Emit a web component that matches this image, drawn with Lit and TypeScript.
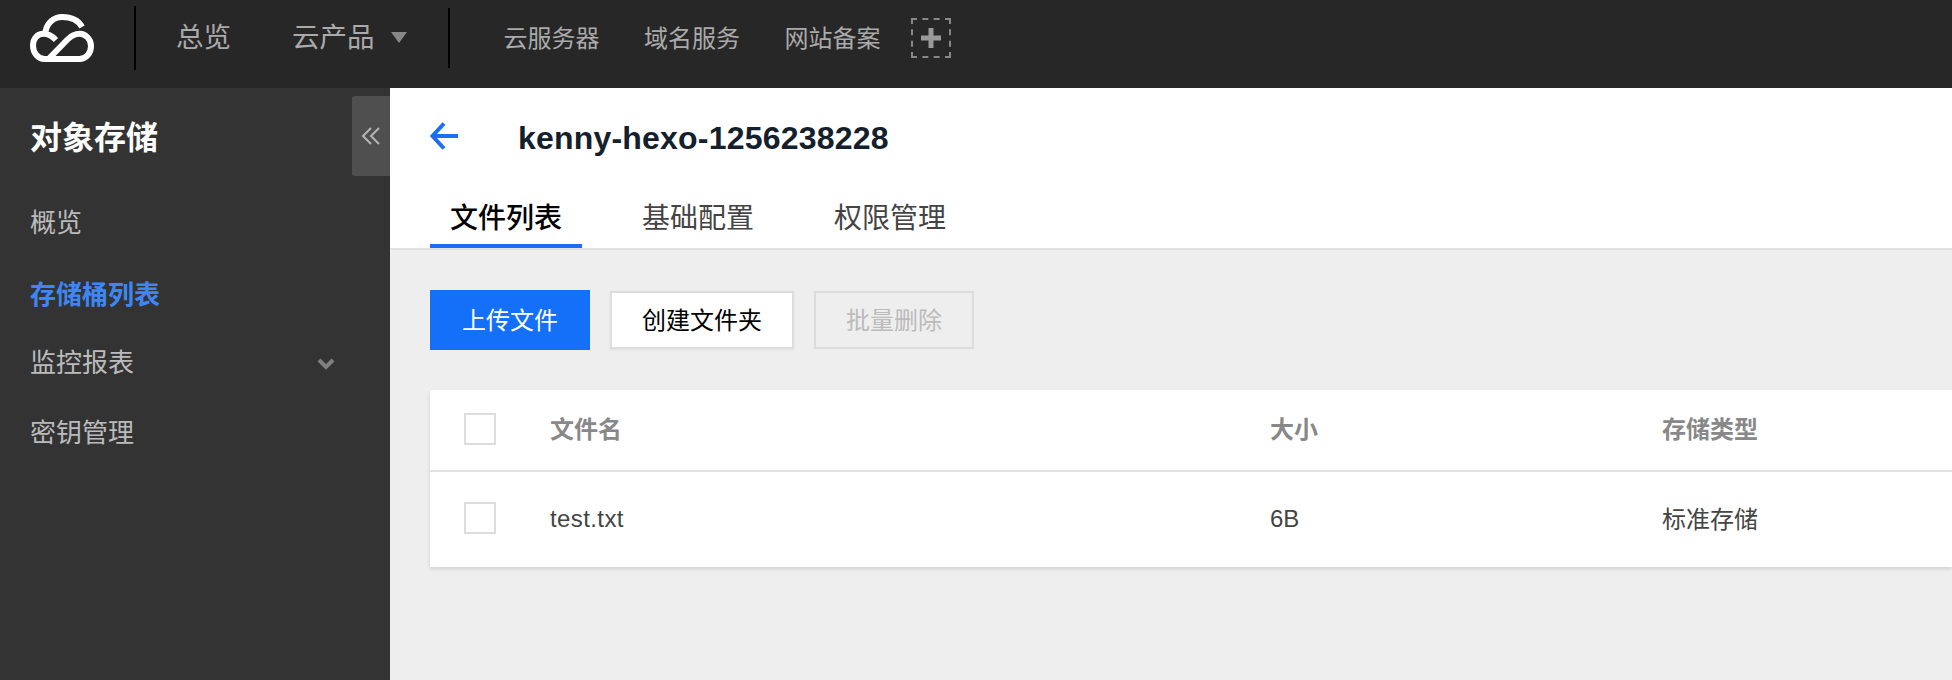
import { LitElement, html, css } from "lit";
import { customElement } from "lit/decorators.js";

@customElement("app-root")
export class AppRoot extends LitElement {
  static styles = css`
    :host { display: block; height: 680px; overflow: hidden; font-family: "Liberation Sans", "Noto Sans CJK SC", sans-serif; background: #eeeeee; }
    * { box-sizing: border-box; }
    .top { height: 88px; background: #272727; display: flex; align-items: flex-start; color: #aaa; }
    .logo { width: 64px; height: 48px; margin: 14px 0 0 30px; flex: none; }
    .vline { width: 2px; height: 64px; background: #000; flex: none; margin-top: 6px; }
    .vline.a { margin-left: 40px; }
    .vline.b { margin-left: 41px; height: 60px; margin-top: 8px; }
    .top-main { display: flex; align-items: center; height: 69px; font-size: 27.5px; }
    .ov { margin-left: 40px; }
    .prod { margin-left: 61px; display: flex; align-items: center; }
    .caret { width: 0; height: 0; border-left: 8px solid transparent; border-right: 8px solid transparent; border-top: 11px solid #888; margin: 6px 0 0 16px; }
    .links { display: flex; align-items: center; height: 72px; font-size: 24px; margin-left: 54px; gap: 44.5px; }
    .plus { width: 40px; height: 40px; border: 2px dashed #888; margin-left: -14px; display: flex; align-items: center; justify-content: center; margin-top: 4px; }
    .body { display: flex; height: 592px; }
    .side { width: 390px; flex: none; background: #333; position: relative; padding: 0 30px; }
    .side h1 { margin: 0; font-size: 32px; line-height: 40px; color: #fff; font-weight: 700; padding-top: 30px; }
    .menu { display: flex; flex-direction: column; margin-top: 47px; font-size: 26px; color: #bbb; }
    .menu div { height: 70px; line-height: 36px; display: flex; justify-content: space-between; align-items: flex-start; }
    .menu .on { color: #3f86f5; font-weight: 700; padding-top: 2px; }
    .chev { margin: 12px 25px 0 0; }
    .collapse { position: absolute; right: 0; top: 8px; width: 38px; height: 80px; background: #4f4f4f; border-radius: 3px 0 0 3px; display: flex; align-items: center; justify-content: center; }
    .main { flex: 1; min-width: 0; display: flex; flex-direction: column; }
    .head { background: #fff; height: 162px; border-bottom: 2px solid #e2e2e2; padding-left: 40px; display: flex; flex-direction: column; }
    .title { display: flex; align-items: center; height: 78px; padding-top: 22px; }
    .arrow { margin-bottom: 4px; flex: none; }
    .title b { font-size: 32px; color: #14202c; margin-left: 60px; letter-spacing: 0.2px; }
    .tabs { display: flex; height: 82px; font-size: 28px; color: #444; gap: 38px; }
    .tab { padding: 33px 21px 0; height: 82px; line-height: 40px; }
    .tab.on { color: #000; font-weight: 500; border-bottom: 4px solid #1a6ff5; width: 152px; padding: 33px 0 0; text-align: center; margin-right: 1px; }
    .content { padding: 40px 0 0 40px; }
    .btns { display: flex; gap: 20px; align-items: center; }
    .btn { height: 58px; font-size: 24px; padding-bottom: 3px; display: flex; align-items: center; justify-content: center; border: 2px solid #ddd; background: #fff; color: #000; box-shadow: 0 1px 3px rgba(0,0,0,.06); }
    .btn.p { width: 160px; height: 60px; background: #146ff9; border-color: #146ff9; color: #fff; box-shadow: none; }
    .btn.s { width: 184px; }
    .btn.d { width: 160px; background: #eeeeee; color: #bbb; box-shadow: none; }
    .table { margin-top: 40px; background: #fff; box-shadow: 0 2px 4px rgba(0,0,0,.12); }
    .row { display: grid; grid-template-columns: 120px 720px 392px 1fr; align-items: center; font-size: 24px; color: #444; }
    .row.h { height: 82px; padding-bottom: 3px; border-bottom: 2px solid #e2e2e2; color: #888; font-weight: 700; }
    .row.h span { padding-bottom: 2px; }
    .row.d { height: 95px; padding-bottom: 3px; }
    .lat { padding-top: 2px; }
    .cjk { padding-bottom: 2px; }
    .fname { letter-spacing: 0.4px; }
    .cb { width: 32px; height: 32px; border: 2px solid #ddd; margin-left: 34px; background: #fff; }
  `;

  render() {
    return html`
      <div class="top">
        <svg class="logo" viewBox="0 0 64 48" fill="none" stroke="#fff" stroke-width="6">
          <path d="M52 13 C47 3.500 37 3 32 3 C24 3 17 9 15.500 17.500"/>
          <path d="M26 26 C21.500 21.500 18 19.800 13.500 19.800 C7.500 19.800 3 24.500 3 31.500 C3 39 8 45 14.500 45 L49.500 45 C56 45 61 39.500 61 32 C61 25 55.500 19.800 49.500 19.800 C44 19.800 41 22 37.500 25.500 L19 44.500" stroke-linejoin="round"/>
        </svg>
        <div class="vline a"></div>
        <div class="top-main">
          <span class="ov">总览</span>
          <span class="prod">云产品<i class="caret"></i></span>
        </div>
        <div class="vline b"></div>
        <div class="links">
          <span>云服务器</span><span>域名服务</span><span>网站备案</span>
          <span class="plus">
            <svg width="20" height="20" viewBox="0 0 20 20"><path d="M10 0v20M0 10h20" stroke="#999" stroke-width="5"/></svg>
          </span>
        </div>
      </div>
      <div class="body">
        <aside class="side">
          <h1>对象存储</h1>
          <div class="menu">
            <div>概览</div>
            <div class="on">存储桶列表</div>
            <div>监控报表
              <svg class="chev" width="18" height="14" viewBox="0 0 18 14" fill="none"><path d="M2 3l7 7 7-7" stroke="#808080" stroke-width="4"/></svg>
            </div>
            <div>密钥管理</div>
          </div>
          <div class="collapse">
            <svg width="20" height="18" viewBox="0 0 20 18" fill="none" stroke="#b4b4b4" stroke-width="2"><path d="M10 1L2 9l8 8M18 1l-8 8 8 8"/></svg>
          </div>
        </aside>
        <main class="main">
          <div class="head">
            <div class="title">
              <svg class="arrow" width="28" height="28" viewBox="0 0 28 28" fill="none" stroke="#1a6ff5" stroke-width="4"><path d="M14 1.500L2.500 14 14 26.500M3 14h25"/></svg>
              <b>kenny-hexo-1256238228</b>
            </div>
            <div class="tabs">
              <div class="tab on">文件列表</div>
              <div class="tab">基础配置</div>
              <div class="tab">权限管理</div>
            </div>
          </div>
          <div class="content">
            <div class="btns">
              <div class="btn p">上传文件</div>
              <div class="btn s">创建文件夹</div>
              <div class="btn d">批量删除</div>
            </div>
            <div class="table">
              <div class="row h"><i class="cb"></i><span>文件名</span><span>大小</span><span>存储类型</span></div>
              <div class="row d"><i class="cb"></i><span class="fname lat">test.txt</span><span class="lat">6B</span><span class="cjk">标准存储</span></div>
            </div>
          </div>
        </main>
      </div>
    `;
  }
}
